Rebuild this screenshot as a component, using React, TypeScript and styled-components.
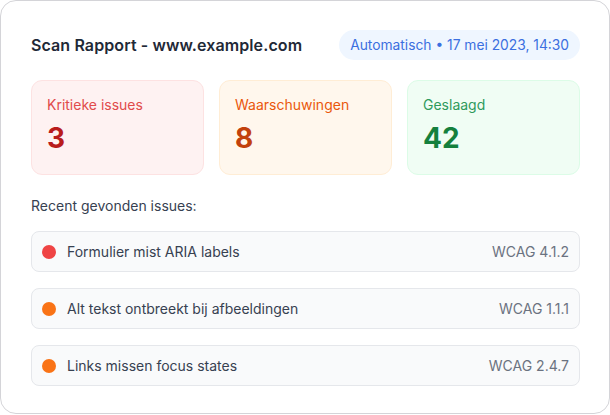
import React from 'react';
import styled, { createGlobalStyle } from 'styled-components';

const GlobalStyle = createGlobalStyle`
  * {
    box-sizing: border-box;
  }
  body {
    margin: 0;
    background: #ffffff;
    font-family: Inter, "Noto Sans", sans-serif;
  }
`;

type Tone = 'red' | 'orange' | 'green';

const tones = {
  red: { bg: '#fef2f2', border: '#fde2e2', label: '#e14b4b', value: '#b91c1c', dot: '#ef4444' },
  orange: { bg: '#fff7ed', border: '#ffedd5', label: '#ea580c', value: '#c2410c', dot: '#f97316' },
  green: { bg: '#f0fdf4', border: '#dcfce7', label: '#2f9a5c', value: '#15803d', dot: '#22c55e' },
};

const stats: { label: string; value: number; tone: Tone }[] = [
  { label: 'Kritieke issues', value: 3, tone: 'red' },
  { label: 'Waarschuwingen', value: 8, tone: 'orange' },
  { label: 'Geslaagd', value: 42, tone: 'green' },
];

const issues: { text: string; rule: string; tone: Tone }[] = [
  { text: 'Formulier mist ARIA labels', rule: 'WCAG 4.1.2', tone: 'red' },
  { text: 'Alt tekst ontbreekt bij afbeeldingen', rule: 'WCAG 1.1.1', tone: 'orange' },
  { text: 'Links missen focus states', rule: 'WCAG 2.4.7', tone: 'orange' },
];

const App = () => {
  return (
    <>
      <GlobalStyle />
      <Card>
        <Header>
          <Title>Scan Rapport - www.example.com</Title>
          <Badge>Automatisch • 17 mei 2023, 14:30</Badge>
        </Header>
        <Stats>
          {stats.map((s) => (
            <Stat key={s.label} tone={s.tone}>
              <StatLabel tone={s.tone}>{s.label}</StatLabel>
              <StatValue tone={s.tone}>{s.value}</StatValue>
            </Stat>
          ))}
        </Stats>
        <SectionTitle>Recent gevonden issues:</SectionTitle>
        <IssueList>
          {issues.map((i) => (
            <Issue key={i.text}>
              <Dot tone={i.tone} />
              <IssueText>{i.text}</IssueText>
              <Rule>{i.rule}</Rule>
            </Issue>
          ))}
        </IssueList>
      </Card>
    </>
  );
};

export default App;

const Card = styled.section`
  width: 610px;
  height: 414px;
  border: 1px solid #d4d4d8;
  border-radius: 16px;
  background: #ffffff;
  padding: 29px 29px 0 30px;
  display: flex;
  flex-direction: column;
`;

const Header = styled.div`
  display: flex;
  align-items: center;
  justify-content: space-between;
  height: 30px;
`;

const Title = styled.h1`
  margin: 0;
  font-size: 16px;
  font-weight: 600;
  letter-spacing: 0.1px;
  color: #1f2937;
`;

const Badge = styled.span`
  height: 30px;
  display: flex;
  align-items: center;
  padding: 0 11px;
  border-radius: 15px;
  background: #eff6ff;
  color: #3b6fe0;
  font-size: 13.8px;
`;

const Stats = styled.div`
  display: grid;
  grid-template-columns: repeat(3, 1fr);
  gap: 15px;
  margin-top: 20px;
`;

const Stat = styled.div<{ tone: Tone }>`
  height: 95px;
  padding: 14px 15px;
  border-radius: 11px;
  background: ${(p) => tones[p.tone].bg};
  border: 1px solid ${(p) => tones[p.tone].border};
  display: flex;
  flex-direction: column;
  gap: 6px;
`;

const StatLabel = styled.span<{ tone: Tone }>`
  font-size: 14px;
  line-height: 20px;
  color: ${(p) => tones[p.tone].label};
`;

const StatValue = styled.span<{ tone: Tone }>`
  font-size: 28px;
  line-height: 34px;
  font-weight: 700;
  color: ${(p) => tones[p.tone].value};
`;

const SectionTitle = styled.h2`
  margin: 21px 0 0;
  font-size: 14px;
  line-height: 20px;
  font-weight: 400;
  color: #374151;
`;

const IssueList = styled.div`
  display: flex;
  flex-direction: column;
  gap: 16px;
  margin-top: 15px;
`;

const Issue = styled.div`
  height: 41px;
  display: flex;
  align-items: center;
  gap: 11px;
  padding: 0 10px 0 10px;
  background: #f9fafb;
  border: 1px solid #e5e7eb;
  border-radius: 8px;
`;

const Dot = styled.span<{ tone: Tone }>`
  width: 14px;
  height: 14px;
  border-radius: 50%;
  background: ${(p) => tones[p.tone].dot};
  flex-shrink: 0;
`;

const IssueText = styled.span`
  flex: 1;
  font-size: 14px;
  color: #374151;
`;

const Rule = styled.span`
  font-size: 14px;
  color: #6b7280;
`;
